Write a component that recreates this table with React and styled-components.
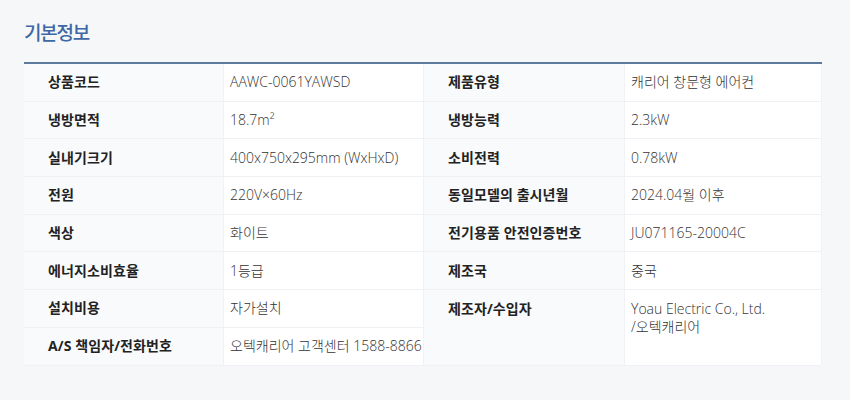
import React from 'react';
import styled, { createGlobalStyle } from 'styled-components';

const GlobalStyle = createGlobalStyle`
  body {
    margin: 0;
    background: #f6f7f9;
    font-family: "Noto Sans CJK KR", "Noto Sans", sans-serif;
  }
`;

const Page = styled.div`
  width: 850px;
  height: 400px;
  box-sizing: border-box;
  padding: 19px 28px 0 24px;
  background: #f6f7f9;
`;

const Title = styled.h2`
  margin: 0 0 17px 0;
  font-size: 19px;
  font-weight: 500;
  letter-spacing: -1.2px;
  line-height: 26px;
  color: #3d68a5;
`;

const Table = styled.div`
  display: grid;
  grid-template-columns: 200px 200px 201px 197px;
  grid-template-rows: repeat(8, 37.7px);
  border-top: 2px solid #5c7b9d;
`;

const Cell = styled.div`
  box-sizing: border-box;
  display: flex;
  align-items: ${(p) => (p.top ? 'flex-start' : 'center')};
  padding: ${(p) => (p.top ? '10px' : '0')} ${(p) => (p.label ? '24px' : '6px')} 0;
  background: ${(p) => (p.label ? '#f9fafb' : '#ffffff')};
  border-bottom: 1px solid #eff1f4;
  border-right: 1px solid #f0f2f5;
  color: ${(p) => (p.label ? '#222' : '#333')};
  font-family: "Open Sans", "Noto Sans CJK KR", sans-serif;
  font-size: 14px;
  font-weight: ${(p) => (p.label ? 700 : 300)};
  letter-spacing: ${(p) => (p.label ? '0.1px' : '0px')};
  line-height: 18px;
  white-space: nowrap;
  grid-row: ${(p) => p.rows || 'auto'};
  grid-column: ${(p) => p.col || 'auto'};
`;

const Lines = styled.div`
  display: flex;
  flex-direction: column;
  line-height: 18px;
`;

const rows = [
  ['상품코드', 'AAWC-0061YAWSD', '제품유형', '캐리어 창문형 에어컨'],
  ['냉방면적', '18.7m²', '냉방능력', '2.3kW'],
  ['실내기크기', '400x750x295mm (WxHxD)', '소비전력', '0.78kW'],
  ['전원', '220V×60Hz', '동일모델의 출시년월', '2024.04월 이후'],
  ['색상', '화이트', '전기용품 안전인증번호', 'JU071165-20004C'],
  ['에너지소비효율', '1등급', '제조국', '중국'],
];

const App = () => (
  <Page>
    <GlobalStyle />
    <Title>기본정보</Title>
    <Table>
      {rows.map((r) => (
        <React.Fragment key={r[0]}>
          <Cell label>{r[0]}</Cell>
          <Cell>{r[1]}</Cell>
          <Cell label>{r[2]}</Cell>
          <Cell>{r[3]}</Cell>
        </React.Fragment>
      ))}
      <Cell label col="1" rows="7">설치비용</Cell>
      <Cell col="2" rows="7">자가설치</Cell>
      <Cell label top col="3" rows="7 / span 2">제조자/수입자</Cell>
      <Cell top col="4" rows="7 / span 2">
        <Lines>
          <span>Yoau Electric Co., Ltd.</span>
          <span>/오텍캐리어</span>
        </Lines>
      </Cell>
      <Cell label col="1" rows="8">A/S 책임자/전화번호</Cell>
      <Cell col="2" rows="8">오텍캐리어 고객센터 1588-8866</Cell>
    </Table>
  </Page>
);

export default App;
